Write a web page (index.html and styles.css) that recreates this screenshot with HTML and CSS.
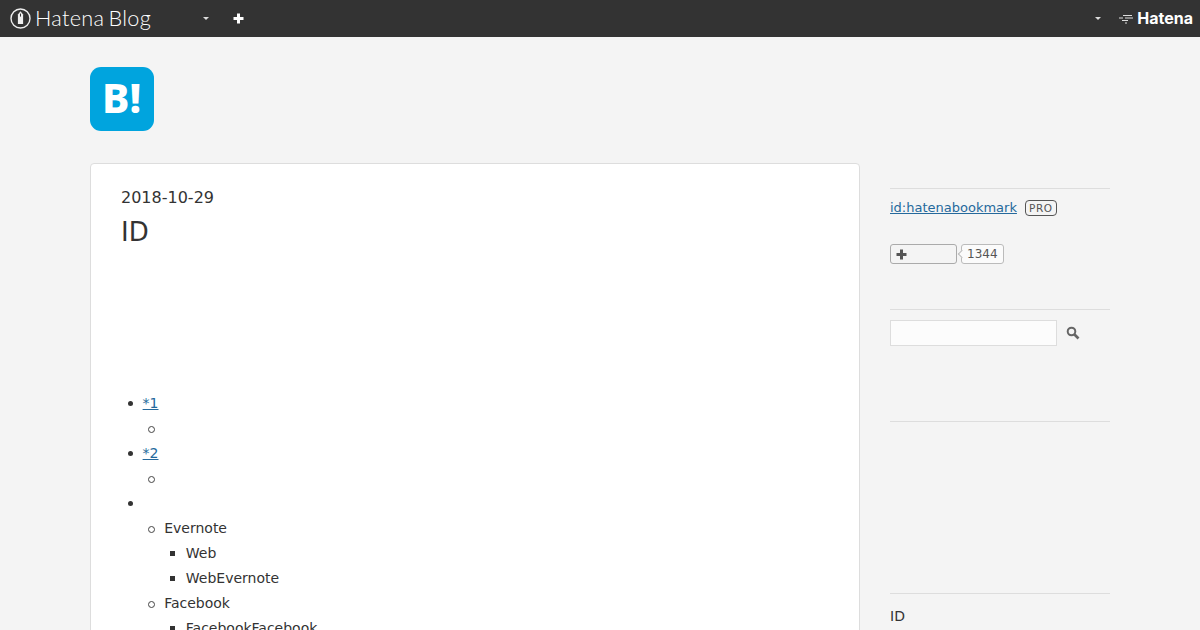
FILE: index.html
```html
<!DOCTYPE html>
<html lang="en">
<head>
  <meta charset="UTF-8">
  <meta name="viewport" content="width=device-width, initial-scale=1.0">
  <title>Hatena Blog</title>
  <link rel="stylesheet" href="styles.css">
</head>
<body>
  <div class="globalheader">
    <div class="globalheader-left">
      <a class="brand" href="#">
        <svg class="brand-icon" width="21" height="21" viewBox="0 0 21 21">
          <circle cx="10.500" cy="10.500" r="9.500" fill="none" stroke="#eee" stroke-width="1.400"/>
          <path d="M10.500 3.200l2.600 3.200v9.600H7.900V6.400z" fill="#eee"/>
          <path d="M10.500 5.600v3" stroke="#333" stroke-width="1"/>
        </svg>
        <span class="brand-name">Hatena Blog</span>
      </a>
      <span class="caret caret-blog"></span>
      <svg class="plus" width="11" height="11" viewBox="0 0 11 11"><path d="M4 .5h3V4h3.500v3H7v3.500H4V7H.5V4H4z" fill="#fff"/></svg>
    </div>
    <div class="globalheader-right">
      <span class="caret"></span>
      <a class="hatena" href="#">
        <svg class="hatena-icon" width="15" height="11" viewBox="0 0 15 11">
          <g stroke="#ddd" stroke-width="1" fill="none">
            <path d="M4 2.500h9"/>
            <path d="M0 5h4M6 5h8"/>
            <path d="M3 7.500h6"/>
            <path d="M6 10h2"/>
          </g>
        </svg>
        <span class="hatena-name">Hatena</span>
      </a>
    </div>
  </div>

  <div class="container">
    <header class="blog-header">
      <svg class="blog-logo" width="64" height="64" viewBox="0 0 64 64">
        <rect width="64" height="64" rx="11" fill="#00a4de"/>
        <text x="12" y="46" class="blog-logo-text">B!</text>
      </svg>
    </header>

    <div class="content">
      <main class="entry">
        <time class="entry-date">2018-10-29</time>
        <h1 class="entry-title">ID</h1>
        <div class="entry-body">
          <ul>
            <li><a href="#">*1</a>
              <ul><li><br></li></ul>
            </li>
            <li><a href="#">*2</a>
              <ul><li><br></li></ul>
            </li>
            <li><br>
              <ul>
                <li>Evernote
                  <ul>
                    <li>Web</li>
                    <li>WebEvernote</li>
                  </ul>
                </li>
                <li>Facebook
                  <ul>
                    <li>FacebookFacebook</li>
                  </ul>
                </li>
              </ul>
            </li>
          </ul>
        </div>
      </main>

      <aside class="sidebar">
        <section class="module module-profile">
          <div class="profile-id">
            <a href="#">id:hatenabookmark</a>
            <span class="pro-badge">PRO</span>
          </div>
          <div class="subscribe">
            <button class="subscribe-btn">
              <svg width="11" height="11" viewBox="0 0 11 11"><path d="M4 .5h3V4h3.500v3H7v3.500H4V7H.5V4H4z" fill="#555"/></svg>
            </button>
            <span class="subscribe-count">1344</span>
          </div>
        </section>
        <section class="module module-search">
          <div class="search">
            <input class="search-input" type="text">
            <svg class="search-icon" width="14" height="14" viewBox="0 0 14 14">
              <circle cx="5.500" cy="5.500" r="3.800" fill="none" stroke="#666" stroke-width="2"/>
              <path d="M8.500 8.500l4 4" stroke="#666" stroke-width="2.600"/>
            </svg>
          </div>
        </section>
        <section class="module module-empty"></section>
        <section class="module module-recent">
          <div class="recent-title">ID</div>
        </section>
      </aside>
    </div>
  </div>
</body>
</html>
```

FILE: styles.css
```css
*{box-sizing:border-box;}
html{overflow:hidden;}
body{margin:0;background:#f4f4f4;color:#333;font-family:"DejaVu Sans",sans-serif;font-size:14px;line-height:25px;}
a{color:#25699c;}

.globalheader{display:flex;justify-content:space-between;align-items:center;height:37px;padding:0 7px 0 10px;background:#333;}
.globalheader-left,.globalheader-right{display:flex;align-items:center;}
.brand{display:flex;align-items:center;width:193px;color:#fff;text-decoration:none;}
.brand-icon{margin-right:4px;}
.brand-name{font-family:Lato,sans-serif;font-size:21.700px;font-weight:300;line-height:37px;letter-spacing:.3px;word-spacing:-2px;}
.caret{width:0;height:0;border:3px solid transparent;border-top:3px solid #ddd;border-bottom:0;}
.plus{margin-left:24px;}
.hatena{display:flex;align-items:center;margin-left:18px;color:#fff;text-decoration:none;}
.hatena-icon{margin-right:3px;}
.hatena-name{font-family:Inter,sans-serif;font-size:16px;font-weight:700;line-height:37px;}

.container{width:1020px;margin:0 auto;}
.blog-header{height:126px;padding-top:30px;}
.blog-logo{display:block;}
.blog-logo-text{font-family:"Noto Sans",sans-serif;font-size:41px;font-weight:800;fill:#fff;}

.content{display:flex;align-items:flex-start;gap:30px;}
.entry{width:770px;min-height:600px;padding:21px 30px 20px;background:#fff;border:1px solid #ddd;border-radius:4px;}
.entry-date{display:block;font-size:16px;line-height:26px;}
.entry-title{margin:3px 0 0;font-size:26px;font-weight:400;line-height:36px;}
.entry-body{padding-top:141px;}
.entry-body ul{margin:0;padding-left:21.600px;list-style:none;}
.entry-body li{position:relative;}
.entry-body li::before{content:"";position:absolute;top:10px;left:-15px;width:5px;height:5px;border-radius:50%;background:#333;}
.entry-body ul ul li::before{left:-16px;background:none;border:1.3px solid #444;}
.entry-body ul ul ul li::before{left:-15.500px;background:#333;border:0;border-radius:0;}

.sidebar{width:220px;padding-top:25px;}
.module{border-top:1px solid #ddd;}
.module-profile{height:121px;padding-top:6px;}
.profile-id{display:flex;align-items:center;font-size:13px;}
.pro-badge{margin-left:8px;padding:0 3px;border:1px solid #555;border-radius:4px;color:#555;font-size:10.500px;line-height:14px;letter-spacing:.6px;}
.subscribe{display:flex;align-items:center;margin-top:24px;}
.subscribe-btn{display:flex;align-items:center;width:67px;height:20px;padding:0 5px;background:#f4f4f4;border:1px solid #aaa;border-radius:3px;}
.subscribe-count{position:relative;height:20px;margin-left:4px;padding:0 5px;background:#fbfbfb;border:1px solid #bbb;border-radius:3px;color:#555;font-size:12px;line-height:18px;}
.subscribe-count::before{content:"";position:absolute;top:6px;left:-3px;width:5px;height:5px;background:#fbfbfb;border-left:1px solid #bbb;border-bottom:1px solid #bbb;transform:rotate(45deg);}
.module-search{height:112px;padding-top:10px;}
.search{display:flex;align-items:center;}
.search-input{width:167px;height:26px;background:#fcfcfc;border:1px solid #ddd;}
.search-icon{margin-left:9px;}
.module-empty{height:172px;}
.recent-title{padding-top:10px;}
```
